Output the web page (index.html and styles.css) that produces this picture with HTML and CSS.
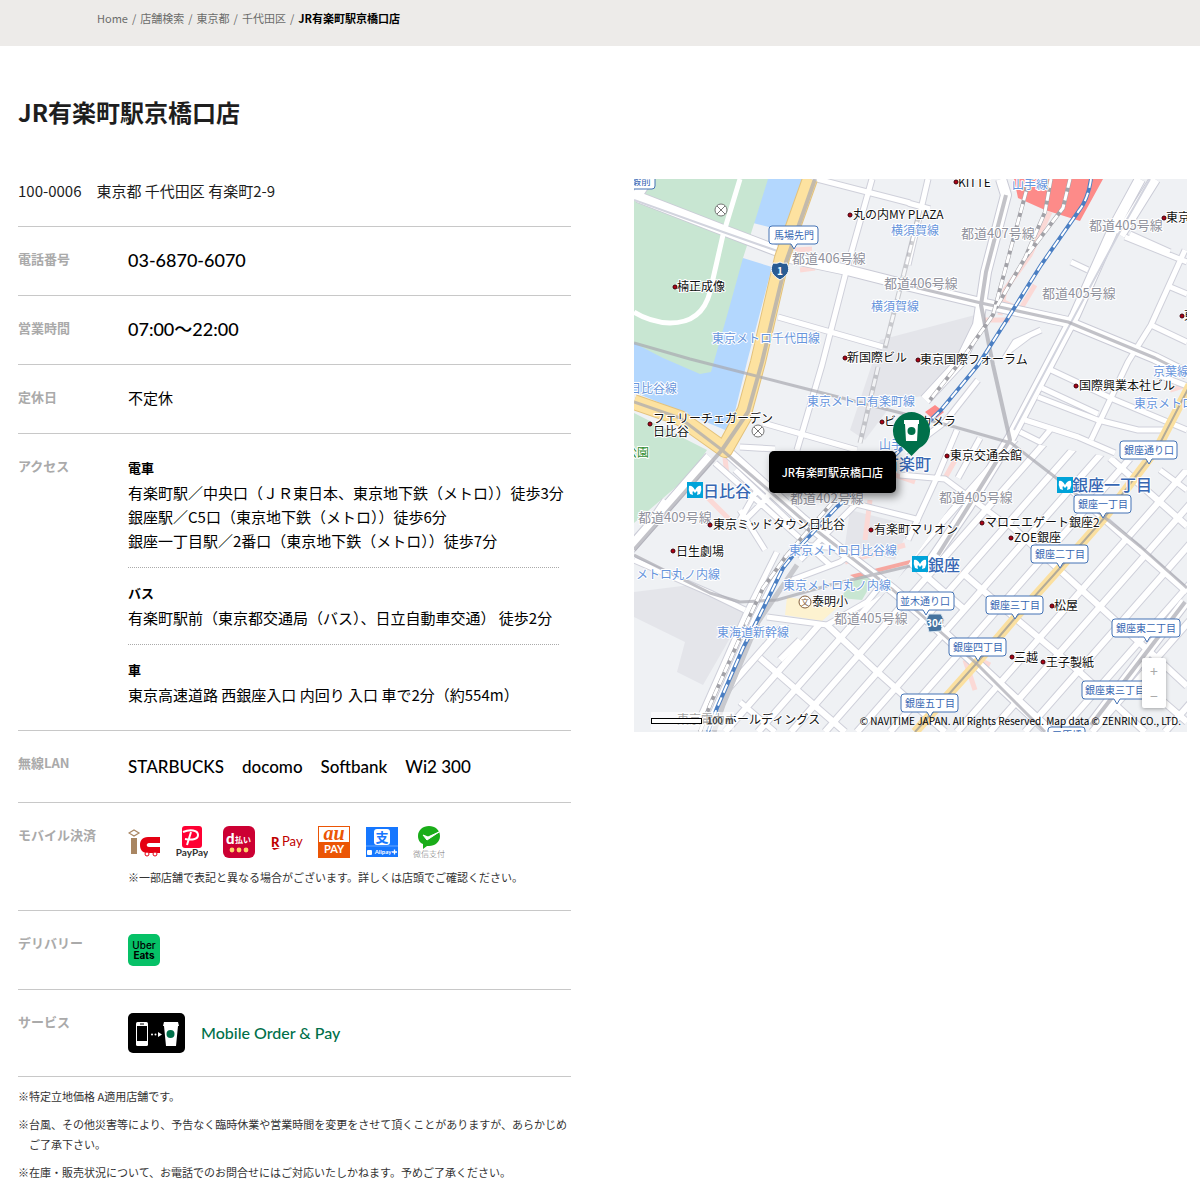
FILE: index.html
```html
<!DOCTYPE html>
<html lang="ja">
<head>
<meta charset="utf-8">
<meta name="viewport" content="width=device-width, initial-scale=1">
<title>JR有楽町駅京橋口店</title>
<link rel="stylesheet" href="styles.css">
</head>
<body>
<nav class="crumbs" aria-label="パンくず">
  <ol class="crumbs-list">
    <li><a href="#">Home</a></li>
    <li><a href="#">店舗検索</a></li>
    <li><a href="#">東京都</a></li>
    <li><a href="#">千代田区</a></li>
    <li class="current" aria-current="page">JR有楽町駅京橋口店</li>
  </ol>
</nav>

<main class="store">
  <h1 class="store-name">JR有楽町駅京橋口店</h1>
  <div class="columns">
    <section class="info">
      <p class="address">100-0006　東京都 千代田区 有楽町2-9</p>
      <dl class="details">
        <div class="row"><dt>電話番号</dt><dd><a class="figures" href="tel:0368706070">03-6870-6070</a></dd></div>
        <div class="row"><dt>営業時間</dt><dd class="figures">07:00〜22:00</dd></div>
        <div class="row"><dt>定休日</dt><dd>不定休</dd></div>
        <div class="row">
          <dt>アクセス</dt>
          <dd class="access">
            <div class="route">
              <h2>電車</h2>
              <p>有楽町駅／中央口（ＪＲ東日本、東京地下鉄（メトロ））徒歩3分</p>
              <p>銀座駅／C5口（東京地下鉄（メトロ））徒歩6分</p>
              <p>銀座一丁目駅／2番口（東京地下鉄（メトロ））徒歩7分</p>
            </div>
            <div class="route">
              <h2>バス</h2>
              <p>有楽町駅前（東京都交通局（バス）、日立自動車交通） 徒歩2分</p>
            </div>
            <div class="route">
              <h2>車</h2>
              <p>東京高速道路 西銀座入口 内回り 入口 車で2分（約554m）</p>
            </div>
          </dd>
        </div>
        <div class="row">
          <dt>無線LAN</dt>
          <dd><ul class="lan"><li>STARBUCKS</li><li>docomo</li><li>Softbank</li><li>Wi2 300</li></ul></dd>
        </div>
        <div class="row">
          <dt>モバイル決済</dt>
          <dd>
            <ul class="payments">
              <li><svg class="pay" viewBox="0 0 32 32" role="img" aria-label="交通系IC">
                <path d="M1 7 6 4l5 3-5 3z" fill="none" stroke="#a98662" stroke-width="1.2"/><path d="M3 12h6v16H3z" fill="#a98662"/>
                <path d="M32 11H20c-6 0-8 4-8 8s2 8 7 8h13v-6H21c-3 0-3-4 0-4h11z" fill="#e50012"/>
                <g fill="#fff" stroke="#e50012"><circle cx="19" cy="28" r="2"/><circle cx="27" cy="28" r="2"/></g></svg></li>
              <li><svg class="pay" viewBox="0 0 32 32" role="img" aria-label="PayPay">
                <rect x="6" width="20" height="22" rx="3" fill="#f03"/>
                <path d="M11 19 15 6M7 6c7-3 15-2 15 3s-7 5-13 4" fill="none" stroke="#fff" stroke-width="2"/>
                <text x="16" y="30" class="t-paypay">PayPay</text></svg></li>
              <li><svg class="pay" viewBox="0 0 32 32" role="img" aria-label="d払い">
                <rect width="32" height="32" rx="6" fill="#cc0033"/>
                <text x="3" y="18" class="t-d">d</text><text x="12" y="17" class="t-barai">払い</text>
                <g fill="#fdd26b"><circle cx="9" cy="24" r="2.4"/><circle cx="16" cy="24" r="2.4"/><circle cx="23" cy="24" r="2.4"/></g></svg></li>
              <li><svg class="pay" viewBox="0 0 32 32" role="img" aria-label="R Pay">
                <text x="0" y="21" class="t-r">R</text><path d="M1 22h8l-6 2z" fill="#bf0000"/><text x="11" y="20" class="t-rpay">Pay</text></svg></li>
              <li><svg class="pay" viewBox="0 0 32 32" role="img" aria-label="au PAY">
                <rect x=".5" y=".5" width="31" height="31" fill="#fff" stroke="#eb5505"/><path d="M0 16h32v16H0z" fill="#eb5505"/>
                <text x="16" y="14" class="t-au">au</text><text x="16" y="27" class="t-aupay">PAY</text></svg></li>
              <li><svg class="pay" viewBox="0 0 32 32" role="img" aria-label="Alipay+">
                <path d="M0 1h32v30H0z" fill="#1677ff"/><rect x="8" y="3" width="16" height="16" rx="3" fill="#fff"/>
                <text x="16" y="16" class="t-zhi">支</text><path d="M0 20h32" stroke="#69a8ff"/>
                <rect x="1" y="24" width="5" height="5" rx="1" fill="#fff"/><text x="17" y="28" class="t-alipay">Alipay</text><path d="M26 26h5m-2.500-2.500v5" stroke="#fff" stroke-width="1.300"/></svg></li>
              <li><svg class="pay" viewBox="0 0 32 32" role="img" aria-label="微信支付">
                <path d="M16 0c6 0 11 4 11 10s-5 10-11 10h-2l-4 3v-5C7 17 5 14 5 10 5 4 10 0 16 0z" fill="#1aad19"/>
                <path d="m10 9 4 5 12-8-11 5z" fill="#fff" stroke="#fff"/>
                <text x="16" y="31" class="t-wechat">微信支付</text></svg></li>
            </ul>
            <p class="note">※一部店舗で表記と異なる場合がございます。詳しくは店頭でご確認ください。</p>
          </dd>
        </div>
        <div class="row">
          <dt>デリバリー</dt>
          <dd><a class="delivery" href="#"><svg class="pay" viewBox="0 0 32 32" role="img" aria-label="Uber Eats">
            <rect width="32" height="32" rx="5" fill="#06c167"/><text x="16" y="15" class="t-uber">Uber</text><text x="16" y="25" class="t-uber t-eats">Eats</text></svg></a></dd>
        </div>
        <div class="row">
          <dt>サービス</dt>
          <dd><a class="service" href="#">
            <svg class="mop" viewBox="0 0 57 40" aria-hidden="true">
              <rect width="57" height="40" rx="5"/>
              <rect x="8" y="9" width="12" height="24" rx="1.500" fill="#fff"/><path d="M9 13h10v15H9z"/><path d="M12 11h4" stroke="#000"/>
              <g fill="#fff"><circle cx="24" cy="21.500" r="1"/><circle cx="27.500" cy="21.500" r="1"/><path d="m30 19 4 2.500-4 2.500zM36 9h14l1 4h-1l-2 20H38l-2-20h-1z"/></g>
              <circle cx="42.500" cy="21" r="4" fill="#00704a"/></svg>
            <span>Mobile Order &amp; Pay</span></a></dd>
        </div>
      </dl>
      <div class="remarks">
        <p>※特定立地価格 A適用店舗です。</p>
        <p>※台風、その他災害等により、予告なく臨時休業や営業時間を変更をさせて頂くことがありますが、あらかじめご了承下さい。</p>
        <p>※在庫・販売状況について、お電話でのお問合せにはご対応いたしかねます。予めご了承ください。</p>
      </div>
    </section>

    <section class="map" aria-label="地図">
      <svg class="map-canvas" viewBox="634 179 553 553">
        <defs>
          <g id="streets">
            <path d="M817 179 910 203M872 179 847 268 822 365 797 450M778 317 883 347M763 423 857 450M740 447 775 449M928 179 908 265M908 203 930 209"/>
            <path d="M1125 237 1187 262M1130 234 1170 252M1185 250 1151 325 1128 362 1091 440M1151 325 1187 342M1168 286 1187 294M1071 262 1088 270M1041 330 1015 342 1005 358M1030 335 1010 350"/>
            <path d="M1051 370 1115 400 1187 430M1038 397 1098 420M1042 388 1098 414M1098 420 1138 430 1165 430M1025 420 1078 437 1115 453M1158 375 1187 386M1160 470 1187 490M1020 432 1040 442 1050 430"/>
            <path d="M978 380 945 422 905 452M900 475 945 479 1000 520M957 430 938 475 908 540M980 438 958 478"/>
            <path d="M715 463 830 565M735 470 790 522M757 490 740 520M785 470 765 500 745 520M800 545 840 548 870 570M792 580 840 562 860 548M840 500 920 520M777 552 747 612 700 718M787 556 755 618 708 725M634 560 710 593 745 610M634 545 665 500M800 560 830 530 860 500M740 510 765 550"/>
            <path d="M767 617 827 625 867 602 885 580M740 702 775 732"/>
          </g>
          <g id="grid">
            <path d="M865 500 661 732M955 430 690 732M990 430 725 732M1023 430 758 732M1056 430 791 732M1090 430 825 732M1122 430 857 732M1155 430 890 732M1222 430 957 732M1255 430 990 732M1290 430 1025 732M1325 430 1060 732M1357 430 1092 732M1430 430 1165 732"/>
            <path d="M827 625 873 668 945 732M760 658 845 732M890 545 965 610M965 575 1015 618 1075 668 1145 732M1010 525 1161 662 1187 686M1060 480 1187 592M1110 458 1187 526M1150 690 1187 722M800 640 780 660"/>
          </g>
          <g id="avenues">
            <path d="M638 197 723 230 783 253M790 258 847 270 910 286 981 303 1068 322 1155 358 1187 374M634 200 648 179"/>
            <path d="M1001 179 1006 195 986 272 978 325 960 362 925 400M1140 179 1115 225 1075 315 1011 437 968 507 925 570M1155 179 1120 235M710 457 627 552M722 447 803 520 843 552 893 590 931 622 978 665 1050 732M1185 602 1091 725"/>
          </g>
          <clipPath id="ginza"><path d="M1011 440 1187 470V732H715L758 625H830L890 590 955 500z"/></clipPath>
        </defs>
        <path d="M634 179h553v553H634z" fill="#eff1f4"/>
        <path d="M880 340 975 315 968 360 930 395 895 400 865 440 850 430zM634 592 690 585 745 612 703 685 677 672 685 642 634 617zM850 510 910 525 895 560 845 545z" fill="#e4e5ea"/>
        <path d="M767 179h38l-17 53-35-9zM743 258l29 9-25 95-17 70-96-40v-49z" fill="#b3d7fe"/>
        <path d="M634 179h134l-14 45-11 34-13 47-19 67-11 2-37-16-29-15zM634 413l73 37-17 25-56 48z" fill="#c8e6d2"/>
        <path d="M787 597l53 8-18 16-37-6z" fill="#fdf2d0"/><path d="M840 598l24-30 12 8-14 24z" fill="#c8e6d2"/>
        <g fill="none" stroke="#fbd9d6" stroke-width="5">
          <path d="M1050 212 1030 255 1005 290 1000 315M1000 300 1020 310 1035 285M985 300 982 320 1010 320M708 498 735 525M845 562 905 545M870 500 865 540M960 650 990 665M965 660 975 690M795 250 812 249M800 270 815 268M908 420 900 430M1170 390 1187 385M725 458 727 475M958 455 945 478M895 475 915 482"/>
        </g>
        <path d="M850 575l60-15v4l-55 14z" fill="#f6a7a0"/>
        <g fill="none" stroke-linejoin="round">
          <g clip-path="url(#ginza)"><use href="#grid" stroke="#cfd0da" stroke-width="8"/></g>
          <use href="#streets" stroke="#cfd0da" stroke-width="7"/>
          <use href="#avenues" stroke="#cacbd6" stroke-width="12"/>
          <g clip-path="url(#ginza)"><use href="#grid" stroke="#fff" stroke-width="6"/></g>
          <use href="#streets" stroke="#fff" stroke-width="5"/>
          <use href="#avenues" stroke="#fff" stroke-width="10"/>
          <path d="M740 179 723 235 710 292Q702 323 670 323 650 322 634 312" stroke="#fff" stroke-width="5"/>
          <path d="M634 200 723 232 783 253M1150 179 1118 235 1075 315 1014 430" stroke="#d2d4de" stroke-width="2"/>
          <path d="M810 179 782 258 758 362 745 410 725 447M634 402 680 418 725 450 745 415" stroke="#e3c27c" stroke-width="16"/>
          <path d="M810 179 782 258 758 362 745 410 725 447M634 402 680 418 725 450 745 415" stroke="#fde2a0" stroke-width="14"/>
          <path d="M1190 385 1158 447 1105 517 1060 568 1015 618 975 665 915 732" stroke="#fbe0a0" stroke-width="9"/>
          <path d="M1190 385 1158 447 1105 517 1060 568 1015 618 975 665 915 732" stroke="#b3ab98" stroke-width="2"/>
          <g stroke="#a9a9b1" stroke-width="4" opacity=".7">
            <path d="M815 179 786 262 762 362 748 412 722 450 634 550M1006 195 986 272 981 305 993 365 1010 440 938 555M1185 602 1091 725"/>
            <path d="M634 402 680 418 722 450 803 520 893 590 978 665 1045 732M634 343 690 359 803 388 897 412 955 427 1011 443 1055 477 1141 547 1187 588M910 286 981 303 1068 322 1155 358 1187 374M634 555 710 593 740 602 777 600 830 585 910 566" stroke-width="3"/>
          </g>
        </g>
        <path d="M1014 179h89l-23 42-35-11-27-12zM925 412l10-7 9 7-10 8z" fill="#fd8b89"/>
        <g fill="none">
          <g opacity=".5">
            <path d="M920 210 885 348M878 367 860 443M797 565 758 622 723 705 714 732" stroke="#a2a2a8" stroke-width="5"/>
            <path d="M920 210 885 348M878 367 860 443" stroke="#fff" stroke-width="3" stroke-dasharray="8 4"/>
          </g>
          <path d="M1029 179 1026 192 993 315 960 362 930 400M1051 179 1045 212 1025 258 996 308M1070 179 1063 208 1025 258M850 482 787 555 763 588 747 622 710 705 700 732" stroke="#a2a2a8" stroke-width="4"/>
          <path d="M1029 179 1026 192 993 315 960 362 930 400M1051 179 1045 212 1025 258 996 308M1070 179 1063 208 1025 258M850 482 787 555 763 588 747 622 710 705 700 732" stroke="#fff" stroke-width="3" stroke-dasharray="9 4"/>
          <path d="M1091 179Q1088 200 1078 212L1041 265 1008 318 978 365 941 410 895 455 837 507 803 543 783 568 760 615 743 648 717 708 708 732" stroke="#4b7fc3" stroke-width="4"/>
          <path d="M1091 179Q1088 200 1078 212L1041 265 1008 318 978 365 941 410 895 455 837 507 803 543 783 568 760 615 743 648 717 708 708 732" stroke="#fff" stroke-width="2" stroke-dasharray="9 5"/>
        </g>
        <g class="m-road">
          <text x="792" y="263">都道406号線</text><text x="884" y="288">都道406号線</text><text x="961" y="238">都道407号線</text>
          <text x="1089" y="230">都道405号線</text><text x="1042" y="298">都道405号線</text><text x="939" y="502">都道405号線</text>
          <text x="790" y="503">都道402号線</text><text x="638" y="522">都道409号線</text><text x="834" y="623">都道405号線</text>
        </g>
        <g class="m-line">
          <text x="891" y="235">横須賀線</text><text x="871" y="311">横須賀線</text><text x="1012" y="189">山手線</text><text x="712" y="343">東京メトロ千代田線</text>
          <text x="629" y="393">日比谷線</text><text x="807" y="406">東京メトロ有楽町線</text><text x="879" y="449">山手線</text><text x="1153" y="376">京葉線</text>
          <text x="1134" y="408">東京メトロ</text><text x="789" y="555">東京メトロ日比谷線</text><text x="636" y="579">メトロ丸ノ内線</text><text x="783" y="590">東京メトロ丸ノ内線</text><text x="717" y="637">東海道新幹線</text>
        </g>
        <g class="m-place">
          <text x="958" y="187">KITTE</text><text x="853" y="219">丸の内MY PLAZA</text><text x="677" y="291">楠正成像</text><text x="847" y="362">新国際ビル</text>
          <text x="920" y="364">東京国際フォーラム</text><text x="1079" y="390">国際興業本社ビル</text><text x="1166" y="222">東京</text><text x="1184" y="320">東</text>
          <text x="653" y="423">フェリーチェガーデン</text><text x="653" y="436">日比谷</text><text x="884" y="426">ビックカメラ</text><text x="950" y="460">東京交通会館</text>
          <text x="713" y="529">東京ミッドタウン日比谷</text><text x="874" y="534">有楽町マリオン</text><text x="985" y="527">マロニエゲート銀座2</text><text x="1014" y="542">ZOE銀座</text>
          <text x="676" y="556">日生劇場</text><text x="812" y="606">泰明小</text><text x="1054" y="610">松屋</text><text x="1014" y="662">三越</text><text x="1046" y="667">王子製紙</text><text x="677" y="724">東京電力ホールディングス</text>
          <text x="625" y="457" class="m-park">公園</text>
        </g>
        <g fill="#b00014" stroke="#3d0008">
          <circle cx="956" cy="182" r="2"/><circle cx="850" cy="215" r="2"/><circle cx="675" cy="287" r="2"/><circle cx="845" cy="358" r="2"/><circle cx="918" cy="360" r="2"/><circle cx="1076" cy="386" r="2"/><circle cx="1164" cy="218" r="2"/><circle cx="1182" cy="316" r="2"/><circle cx="650" cy="424" r="2"/><circle cx="882" cy="422" r="2"/><circle cx="947" cy="456" r="2"/><circle cx="710" cy="525" r="2"/><circle cx="871" cy="530" r="2"/><circle cx="982" cy="523" r="2"/><circle cx="1011" cy="538" r="2"/><circle cx="673" cy="551" r="2"/><circle cx="1052" cy="606" r="2"/><circle cx="1012" cy="657" r="2"/><circle cx="1043" cy="662" r="2"/>
        </g>
        <g fill="#fff" stroke="#777"><circle cx="721" cy="210" r="6"/><path d="m717 206 8 8m0-8-8 8"/><circle cx="758" cy="431" r="6"/><path d="m754 427 8 8m0-8-8 8"/></g>
        <circle cx="805" cy="602" r="6" fill="#fff" stroke="#85603c"/><text x="801" y="605" class="m-school">文</text>
        <g class="m-station"><text x="703" y="497">日比谷</text><text x="883" y="470">有楽町</text><text x="1072" y="491">銀座一丁目</text><text x="928" y="571">銀座</text></g>
        <g fill="#00a3d9"><path d="M687 482h16v16h-16zM1057 477h16v16h-16zM912 556h16v16h-16z"/></g>
        <g fill="#fff">
          <path id="metro" d="M689 486q3-1 6 4 3-5 6-4 1 4-1 8l-3 1q1-3 0-4l-2 2-2-2q-1 1 0 4l-3-1q-2-4-1-8z"/>
          <use href="#metro" x="370" y="-5"/><use href="#metro" x="225" y="74"/>
        </g>
        <path d="M780 262c3 2 6 1 7 1 3 6 3 11-7 17-10-6-10-11-7-17 1 0 4 1 7-1z" fill="#2a5c93" stroke="#fff"/><text x="777" y="275" class="m-shield">1</text>
        <path d="M929 614h12l3 6-3 11-12 1-3-12z" fill="#45739f" stroke="#dbe6f0"/><text x="926" y="627" class="m-shield">304</text>
        <g class="m-sign">
          <path d="M772 226h43q3 0 3 3v12q0 3-3 3h-18l-3 5-3-5h-19q-3 0-3-3v-12q0-3 3-3z"/><text x="794" y="239">馬場先門</text>
          <path id="sign" d="M1123 441h51q3 0 3 3v12q0 3-3 3h-22l-3 5-3-5h-23q-3 0-3-3v-12q0-3 3-3z"/><text x="1149" y="454">銀座通り口</text>
          <use href="#sign" x="-46" y="54"/><text x="1103" y="508">銀座一丁目</text>
          <use href="#sign" x="-89" y="104"/><text x="1060" y="558">銀座二丁目</text>
          <use href="#sign" x="-134" y="155"/><text x="1015" y="609">銀座三丁目</text>
          <use href="#sign" x="-171" y="197"/><text x="978" y="651">銀座四丁目</text>
          <use href="#sign" x="-219" y="253"/><text x="930" y="707">銀座五丁目</text>
          <use href="#sign" x="-223" y="151"/><text x="925" y="605">並木通り口</text>
          <path id="wide-sign" d="M1115 619h62q3 0 3 3v12q0 3-3 3h-27l-3 5-3-5h-29q-3 0-3-3v-12q0-3 3-3z"/><text x="1146" y="632">銀座東二丁目</text>
          <use href="#wide-sign" x="-30" y="62"/><text x="1115" y="694">銀座東三丁目</text>
          <path d="M625 170h26q4 0 4 4v12q0 3-3 3h-27z"/><text x="641" y="185">鍛前</text>
          <rect x="1048" y="727" width="37" height="18" rx="3"/><text x="1067" y="739">三原橋</text>
        </g>
      </svg>
      <svg class="pin" viewBox="0 0 39 44" role="img" aria-label="店舗の位置">
        <path d="M19.500 0a19 19 0 0 1 8 36l-8 8-8-8a19 19 0 0 1 8-36z" fill="#00704a"/>
        <path d="M12 8h15v4h-1l-1 17H14l-1-17h-1z" fill="#fff"/><circle cx="19.500" cy="19" r="4" fill="#00704a"/></svg>
      <div class="tip">JR有楽町駅京橋口店</div>
      <div class="zoom"><button type="button" aria-label="拡大">+</button><button type="button" aria-label="縮小">−</button></div>
      <div class="scale"><span class="scale-bar"></span><span>100 m</span></div>
      <p class="credit">© NAVITIME JAPAN. All Rights Reserved. Map data © ZENRIN CO., LTD.</p>
    </section>
  </div>
</main>
</body>
</html>
```
FILE: styles.css
```css
* { box-sizing: border-box; }
body, h1, h2, p, ul, ol, dl, dd { margin: 0; padding: 0; }
ul, ol { list-style: none; }
a { color: inherit; text-decoration: none; }
svg { display: block; }

body {
  background: #fff;
  color: #000;
  font: 15px/24px "Noto Sans CJK JP", sans-serif;
}

/* Breadcrumbs */
.crumbs { padding: 8px 97px 18px; background: #edebe9; }
.crumbs-list { display: flex; flex-wrap: wrap; font-size: 11px; line-height: 20px; color: #6b6b6b; }
.crumbs-list li + li::before { content: "/"; margin: 0 4px; font-weight: 400; color: #6b6b6b; }
.crumbs-list .current { color: #000; font-weight: 700; }

/* Page */
.store { padding: 48px 13px 8px 18px; }
.store-name { margin-bottom: 49px; font-size: 24px; line-height: 36px; color: #1e1e1e; }
.columns { display: grid; grid-template-columns: repeat(2, minmax(0, 1fr)); gap: 63px; align-items: start; }

/* Store details */
.address, .row { border-bottom: 1px solid #c8c8c8; }
.address { padding-bottom: 23px; color: #1e1e1e; }
.row { display: grid; grid-template-columns: 110px minmax(0, 1fr); padding: 23px 0; }
dt { font-size: 13px; line-height: 18px; font-weight: 700; color: #aaa; }
dd { min-height: 22px; line-height: 20px; }
.figures, .lan, .service { font-family: Lato, "Noto Sans CJK JP", sans-serif; font-weight: 500; }
.figures { font-size: 18px; }
.access { padding-right: 12px; white-space: nowrap; line-height: 24px; }
.route + .route { margin-top: 14px; padding-top: 14px; border-top: 1px dotted #aaa; }
.route h2 { margin-bottom: 2px; font-size: 13px; line-height: 22px; }
.lan { display: flex; flex-wrap: wrap; gap: 0 18px; font-size: 17px; line-height: 25px; }
.payments { display: flex; justify-content: space-between; max-width: 317px; }
.pay { width: 32px; height: 32px; }
.note { margin-top: 10px; line-height: 19px; }
.note, .remarks { font-size: 11px; color: #333; }
.service { display: flex; align-items: center; gap: 16px; font-size: 16px; color: #00704a; }
.mop { width: 57px; height: 40px; }
.remarks { display: grid; gap: 8px; padding-top: 9px; line-height: 20px; }
.remarks p { padding-left: 11px; text-indent: -11px; }

/* Lettering of the payment and delivery marks */
.pay text { font-family: Lato, "Noto Sans CJK JP", sans-serif; font-weight: 700; }
.pay .t-paypay { font-size: 10px; text-anchor: middle; fill: #333; }
.pay .t-d { font-size: 15px; font-weight: 900; fill: #fff; }
.pay .t-barai { font-size: 8px; fill: #fff; }
.pay .t-r { font-size: 13px; font-weight: 900; fill: #bf0000; }
.pay .t-rpay { font-size: 13px; font-weight: 400; fill: #bf0000; }
.pay .t-au { font: italic 700 20px "Liberation Serif", serif; text-anchor: middle; fill: #eb5505; }
.pay .t-aupay { font-size: 11px; text-anchor: middle; fill: #fff; }
.pay .t-zhi { font-size: 13px; text-anchor: middle; fill: #1677ff; }
.pay .t-alipay { font-size: 6px; text-anchor: middle; fill: #fff; }
.pay .t-wechat { font-size: 8px; font-weight: 300; text-anchor: middle; fill: #777; }
.pay .t-uber { font-family: Inter, sans-serif; font-size: 10px; font-weight: 500; text-anchor: middle; }
.pay .t-eats { font-weight: 700; }

/* Map */
.map { position: relative; overflow: hidden; aspect-ratio: 1; }
.map-canvas { width: 100%; height: 100%; }
.map-canvas text { font-family: "Noto Sans CJK JP", sans-serif; font-size: 12px; paint-order: stroke; stroke: #fff; stroke-width: 2px; stroke-linejoin: round; }
.map-canvas .m-road text { font-size: 13px; fill: #8f919c; }
.map-canvas .m-line text { fill: #6795dc; }
.map-canvas .m-place text { fill: #111; }
.map-canvas .m-place .m-park { fill: #2e8b2e; }
.map-canvas .m-station text { font-size: 16px; font-weight: 500; fill: #3767b3; }
.map-canvas .m-school { font-size: 8px; fill: #85603c; stroke: none; }
.map-canvas .m-shield { font-size: 10px; font-weight: 700; fill: #fff; stroke: none; }
.m-sign { fill: #fff; stroke: #4473b5; }
.map-canvas .m-sign text { font-size: 10px; fill: #3767b3; stroke: none; text-anchor: middle; }
.pin { position: absolute; left: 50%; bottom: 50%; width: 39px; height: 44px; margin-left: -19px; }
.tip {
  position: absolute; right: 291px; top: 272px;
  padding: 12px 13px; border-radius: 5px;
  background: #000; color: #fff; font-size: 11px; line-height: 18px; font-weight: 500;
  box-shadow: 3px 4px 8px rgba(0, 0, 0, .45);
}
.zoom {
  position: absolute; right: 21px; bottom: 24px;
  display: grid; width: 24px; background: #fff; border-radius: 2px;
  box-shadow: 0 1px 4px rgba(0, 0, 0, .35);
}
.zoom button { height: 25px; padding: 0; border: 0; background: none; color: #aaa; font: 14px/24px "Noto Sans CJK JP", sans-serif; }
.scale {
  position: absolute; left: 17px; bottom: 2px;
  display: flex; align-items: center; gap: 5px;
  background: rgba(255, 255, 255, .6); font-size: 9px; line-height: 18px; font-weight: 700; color: #444;
}
.scale-bar { width: 51px; height: 6px; border: 1px solid #000; background: #fff; }
.credit { position: absolute; right: 6px; bottom: 1px; font-size: 10px; line-height: 20px; }
```
